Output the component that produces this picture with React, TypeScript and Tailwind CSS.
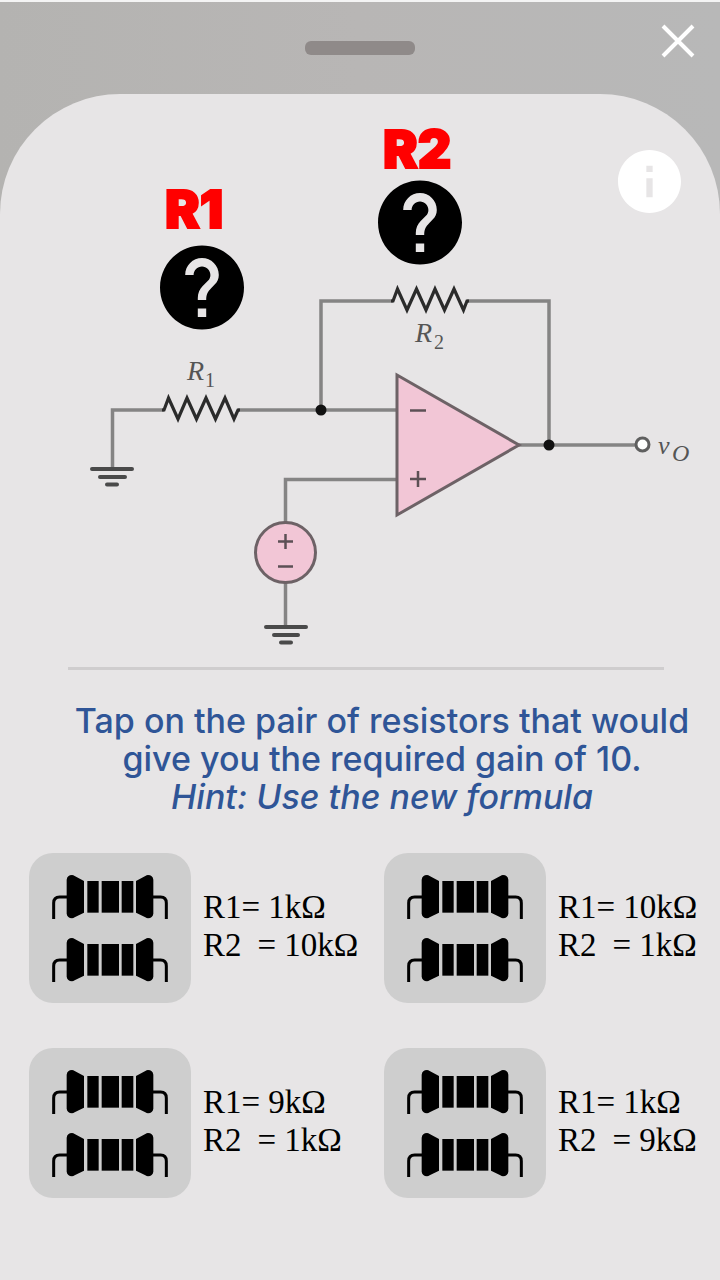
import React from "react";

type Pair = { r1: string; r2: string };

const pairs: Pair[] = [
  { r1: "1kΩ", r2: "10kΩ" },
  { r1: "10kΩ", r2: "1kΩ" },
  { r1: "9kΩ", r2: "1kΩ" },
  { r1: "1kΩ", r2: "9kΩ" },
];

const helpPath =
  "M12 2C6.48 2 2 6.48 2 12s4.48 10 10 10 10-4.48 10-10S17.52 2 12 2zm1 17h-2v-2h2v2zm2.07-7.75l-.9.92C13.45 12.9 13 13.5 13 15h-2v-.5c0-1.1.45-2.1 1.17-2.83l1.24-1.26c.37-.36.59-.86.59-1.41 0-1.1-.9-2-2-2s-2 .9-2 2H8c0-2.21 1.79-4 4-4s4 1.79 4 4c0 .88-.36 1.68-.93 2.25z";

function Resistor() {
  return (
    <svg viewBox="0 0 348 132" className="h-11 w-[116px]" aria-hidden="true">
      <g fill="none" stroke="#000" strokeWidth="9">
        <path d="M5 132V84Q5 66 23 66H46" />
        <path d="M302 66H326Q343 66 343 84V132" />
      </g>
      <path d="M44 14Q46 0 60 0Q64 0 68 3L96 18V113L68 127Q64 130 60 130Q46 129 44 116Z" />
      <path d="M304 14Q302 0 288 0Q284 0 280 3L252 18V113L280 127Q284 130 288 130Q302 129 304 116Z" />
      <rect x="106" y="18" width="34" height="95" />
      <rect x="149" y="18" width="52" height="95" />
      <rect x="209" y="18" width="35" height="95" />
    </svg>
  );
}

function Circuit() {
  return (
    <svg
      viewBox="0 94 720 573"
      className="block w-full"
      role="img"
      aria-label="Non-inverting amplifier circuit with unknown R1 and R2"
    >
      <g fill="none" stroke="#858484" strokeWidth="3.5">
        <path d="M112.5 467V410H164" />
        <path d="M238 410H397" />
        <path d="M321 410V301H393" />
        <path d="M467 301H549V445" />
        <path d="M518 445H636" />
        <path d="M285.5 523V479.5H397" />
        <path d="M285.5 582V626" />
      </g>
      <g fill="none" stroke="#2b2b2b" strokeWidth="3.2">
        <path d="M162 410H164L168.500 398L178 419L187 398L196.500 419L206 398L215.500 419L225 398L234 419L238 410H240" />
        <path d="M391 301H393L397.500 289L407 310L416.500 289L426 310L435 289L444.500 310L454 289L463.500 310L467 301H469" />
      </g>
      <g fill="none" stroke="#4a4a4a" strokeWidth="4" strokeLinecap="round">
        <path d="M92 469H132M100 477H125M107 484.5H117" />
        <path d="M266 627H306M274 635H298M281 642.5H291" />
      </g>
      <path d="M397 375L519 445L397 515Z" fill="#f2c6d6" stroke="#6d6266" strokeWidth="3" />
      <circle cx="285.5" cy="552.5" r="30" fill="#f2c6d6" stroke="#6d6266" strokeWidth="3" />
      <g fill="none" stroke="#5c5055" strokeWidth="2.5">
        <path d="M410 410.5H426M410 479H426M418 471V487" />
        <path d="M278 541.5H293M285.5 534V549M278 566.5H293" />
      </g>
      <g fill="#111">
        <circle cx="321" cy="410" r="5.5" />
        <circle cx="549" cy="445" r="5.5" />
      </g>
      <circle cx="642.5" cy="444.5" r="6.5" fill="#fff" stroke="#5f5f5f" strokeWidth="3" />
      <g fill="#555" className="font-['Liberation_Serif',serif] italic">
        <text x="187" y="380" fontSize="28">R</text>
        <text x="205" y="387" fontSize="20" fontStyle="normal">1</text>
        <text x="415" y="342" fontSize="28">R</text>
        <text x="434" y="349" fontSize="20" fontStyle="normal">2</text>
        <text x="658" y="454" fontSize="26">v</text>
        <text x="672" y="461" fontSize="24">O</text>
      </g>
      <g
        fill="#f00"
        stroke="#f00"
        strokeWidth="2"
        className="font-['Inter',sans-serif] font-black"
      >
        <text x="165" y="228" fontSize="52">R1</text>
        <text x="383" y="168" fontSize="52">R2</text>
      </g>
      <path d={helpPath} transform="translate(151.6 237.1) scale(4.2)" />
      <path d={helpPath} transform="translate(369.6 172.1) scale(4.2)" />
    </svg>
  );
}

function PairOption({ r1, r2 }: Pair) {
  return (
    <button type="button" className="flex items-center gap-3 text-left">
      <span className="flex h-[150px] w-[162px] shrink-0 flex-col items-center justify-center gap-[19px] rounded-3xl bg-[#cecece]">
        <Resistor />
        <Resistor />
      </span>
      <span className="flex flex-col whitespace-nowrap pb-1 font-['Liberation_Serif',serif] text-[33px] leading-[38px] text-black">
        <span className="flex">
          <span>R1=</span>
          <span className="ml-2">{r1}</span>
        </span>
        <span className="flex">
          <span>R2</span>
          <span className="ml-4">=</span>
          <span className="ml-2">{r2}</span>
        </span>
      </span>
    </button>
  );
}

export default function App() {
  return (
    <div className="flex min-h-screen flex-col border-t-2 border-[#f4f4f4] bg-linear-to-r from-[#b4b3b1] via-[#b8b6b5] to-[#b8b8b8]">
      <header className="relative flex h-[92px] shrink-0 justify-center pt-[39px]">
        <div className="h-[14px] w-[110px] rounded-md bg-[#8f8a89]" />
        <button type="button" aria-label="Close" className="absolute top-[19px] right-[22px]">
          <svg viewBox="0 0 40 40" className="size-10" fill="none" stroke="#fff" strokeWidth="4">
            <path d="M5 5L35 35M35 5L5 35" />
          </svg>
        </button>
      </header>

      <main className="flex-1 rounded-t-[120px] bg-[#e7e5e6] pb-20">
        <section className="relative">
          <Circuit />
          <button type="button" aria-label="Information" className="absolute top-[50px] right-[33px]">
            <svg viewBox="2 2 20 20" className="size-[75px] p-[6px]" fill="#fff">
              <path d="M12 2C6.48 2 2 6.48 2 12s4.48 10 10 10 10-4.48 10-10S17.52 2 12 2zm1 15h-2v-6h2v6zm0-8h-2V7h2v2z" />
            </svg>
          </button>
        </section>

        <hr className="mr-14 ml-[68px] border-t-[3px] border-[#cfcdce]" />

        <p className="mt-8 pl-11 text-center font-['Inter',sans-serif] text-[34px] leading-[38px] font-medium text-[#2f5597]">
          Tap on the pair of resistors that would
          <br />
          give you the required gain of 10.
          <br />
          <em>Hint: Use the new formula</em>
        </p>

        <section
          aria-label="Resistor pairs"
          className="mt-[37px] grid grid-cols-[355fr_336fr] gap-y-[45px] pl-[29px]"
        >
          {pairs.map((pair) => (
            <PairOption key={pair.r1 + pair.r2} {...pair} />
          ))}
        </section>
      </main>
    </div>
  );
}
